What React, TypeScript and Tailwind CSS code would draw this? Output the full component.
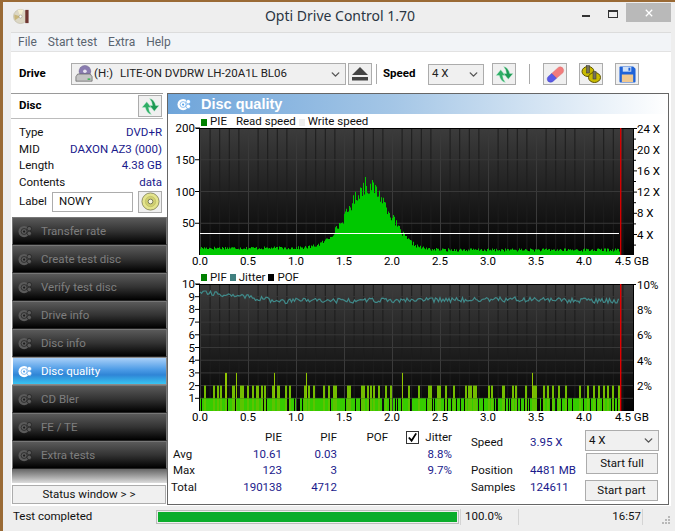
import { ChevronDown } from "lucide-react";

function makeRandom(seed: number) {
  let s = seed;
  return () => {
    s = (s * 1664525 + 1013904223) % 4294967296;
    return s / 4294967296;
  };
}

const plotLeft = 200;
const plotEnd = 619;
const xLabels = ["0.0", "0.5", "1.0", "1.5", "2.0", "2.5", "3.0", "3.5", "4.0"];

function buildPie() {
  const rnd = makeRandom(17);
  let d = "M200 255";
  for (let x = plotLeft; x <= plotEnd; x++) {
    const base = x < 340 ? 11 : 8;
    const dist = x - 368;
    const bump = 100 * Math.exp(-(dist * dist) / 860);
    let v = base + bump + (rnd() - 0.5) * (5 + bump * 0.2);
    if (x === 365) v = 123;
    const y = (255 - v * 0.635).toFixed(1);
    d += `V${y}H${x + 1}`;
  }
  return d + "V255Z";
}

function buildJitter() {
  const rnd = makeRandom(91);
  const stops = [
    [200, 293],
    [233, 295],
    [270, 300],
    [283, 302],
    [303, 300],
    [336, 301],
    [420, 300],
    [520, 299.5],
    [619, 301],
  ];
  const pts: string[] = [];
  for (let x = plotLeft; x <= plotEnd; x += 1.5) {
    let i = 0;
    while (i < stops.length - 2 && stops[i + 1][0] < x) i++;
    const t = (x - stops[i][0]) / (stops[i + 1][0] - stops[i][0]);
    const y = stops[i][1] + (stops[i + 1][1] - stops[i][1]) * t + (rnd() - 0.5) * 5;
    pts.push(`${x},${y.toFixed(1)}`);
  }
  return pts.join(" ");
}

const pifTwoLeft = [103, 130, 140, 150, 185, 190, 210, 215, 232, 245, 258, 262, 272, 282, 305, 320, 325, 345, 358, 403, 415, 430, 460, 475, 490, 495, 530, 537, 572, 580, 592, 600, 610, 625, 645, 660, 715, 745];
const pifTwoRight = [25, 30, 50, 55, 58, 75, 100, 135, 145, 150, 158, 165, 205, 212, 245, 250, 275, 285, 315, 340, 345, 370, 380, 395, 415, 435, 478, 500, 520, 535, 550, 560, 575, 595, 598];
const pifThree = [225, 226, 236, 274, 306, 402, 532];

function buildPif() {
  const rnd = makeRandom(5);
  const twos = new Set([
    ...pifTwoLeft.map((z) => Math.round(170 + z / 3)),
    ...pifTwoRight.map((z) => Math.round(420 + z / 3)),
  ]);
  const bars: { x: number; level: number }[] = [];
  for (let x = plotLeft; x <= plotEnd; x++) {
    const hardGap = (x >= 262 && x <= 266) || (x >= 287 && x <= 290) || (x >= 297 && x <= 299) || x === 201;
    const chance = x < 320 ? 0.95 : 0.7;
    let level = !hardGap && rnd() < chance ? 1 : 0;
    if (twos.has(x) || twos.has(x - 1)) level = 2;
    if (pifThree.includes(x)) level = 3;
    bars.push({ x, level });
  }
  return bars;
}

const piePath = buildPie();
const jitterPoints = buildJitter();
const pifBars = buildPif();

function PlotBackground({ id, top }: { id: string; top: number }) {
  const bottom = top + 127;
  return (
    <>
      <defs>
        <linearGradient id={id} x1="0" y1="0" x2="0" y2="1">
          <stop offset="0" stopColor="#3c3c3c" />
          <stop offset="1" stopColor="#030303" />
        </linearGradient>
      </defs>
      <rect x="200" y={top} width="433" height="127" fill={`url(#${id})`} />
      {Array.from({ length: 45 }, (_, i) => (
        <line
          key={i}
          x1={200.5 + i * 9.6}
          x2={200.5 + i * 9.6}
          y1={top}
          y2={bottom}
          stroke={i % 5 === 0 ? "#3a3a3a" : "#1d1d1d"}
        />
      ))}
      <line x1="196" x2="636" y1={top + 0.5} y2={top + 0.5} stroke="#000" />
      <line x1="199.5" x2="199.5" y1={top} y2={bottom} stroke="#000" />
      <line x1="633.5" x2="633.5" y1={top} y2={bottom} stroke="#000" />
    </>
  );
}

function XAxis({ y }: { y: number }) {
  return (
    <>
      {xLabels.map((t, i) => (
        <text key={t} x={200 + i * 48} y={y} textAnchor="middle" fontSize="11.5" fill="#000">
          {t}
        </text>
      ))}
      <text x="615" y={y} fontSize="11.5" fill="#000">
        4.5 GB
      </text>
    </>
  );
}

function PieChart() {
  const hLines = [50, 100, 150].map((v) => 255 - v * 0.635);
  const speeds = ["24 X", "20 X", "16 X", "12 X", "8 X", "4 X"];
  return (
    <svg viewBox="168 128 500 142" className="w-[500px] h-[142px] block overflow-visible">
      <PlotBackground id="pieBg" top={128} />
      {hLines.map((y) => (
        <line key={y} x1="200" x2="633" y1={y} y2={y} stroke="#383838" />
      ))}
      <path d={piePath} fill="#00c800" />
      <line x1="200" x2="619" y1="233.5" y2="233.5" stroke="#fff" />
      <line x1="620.7" x2="620.7" y1="128" y2="255" stroke="#d40000" strokeWidth="1.4" />
      {[200, 150, 100, 50].map((v) => (
        <g key={v}>
          <line x1="195" x2="200" y1={255 - v * 0.635} y2={255 - v * 0.635} stroke="#000" />
          <text x="195" y={259 - v * 0.635} textAnchor="end" fontSize="11.5" fill="#000">
            {v}
          </text>
        </g>
      ))}
      {Array.from({ length: 12 }, (_, i) => (
        <line key={i} x1="633" x2={i % 2 === 0 ? 637 : 636} y1={128.5 + i * 10.6} y2={128.5 + i * 10.6} stroke="#000" />
      ))}
      {speeds.map((t, i) => (
        <text key={t} x="637" y={133 + i * 21.1} fontSize="11.5" fill="#000">
          {t}
        </text>
      ))}
      <XAxis y={265} />
    </svg>
  );
}

function PifChart() {
  return (
    <svg viewBox="168 284 500 141" className="w-[500px] h-[141px] block overflow-visible">
      <PlotBackground id="pifBg" top={284} />
      {[1, 2, 3, 4, 5, 6, 7, 8, 9].map((v) => (
        <line key={v} x1="200" x2="633" y1={411 - v * 12.7} y2={411 - v * 12.7} stroke="#383838" />
      ))}
      {pifBars.map((b) =>
        b.level === 0 ? null : (
          <g key={b.x}>
            {b.level >= 2 && <rect x={b.x} y={411 - b.level * 12.7} width="1" height={(b.level - 1) * 12.7} fill={b.level === 3 ? "#8fc400" : "#74bd00"} />}
            <rect x={b.x} y="398.3" width="1" height="12.7" fill={b.level >= 2 ? "#5cc400" : "#36cc00"} />
          </g>
        ),
      )}
      <polyline points={jitterPoints} fill="none" stroke="#408a8a" strokeWidth="1.2" />
      <line x1="620.7" x2="620.7" y1="284" y2="411" stroke="#e00000" strokeWidth="1.4" />
      {[10, 9, 8, 7, 6, 5, 4, 3, 2, 1].map((v) => (
        <g key={v}>
          <line x1="195" x2="200" y1={411 - v * 12.7} y2={411 - v * 12.7} stroke="#000" />
          <text x="195" y={415 - v * 12.7} textAnchor="end" fontSize="11.5" fill="#000">
            {v}
          </text>
        </g>
      ))}
      {["10%", "8%", "6%", "4%", "2%"].map((t, i) => (
        <text key={t} x="637" y={289 + i * 25.2} fontSize="11.5" fill="#000">
          {t}
        </text>
      ))}
      <XAxis y={421} />
    </svg>
  );
}

function ArrowsIcon() {
  return (
    <svg viewBox="0 0 20 20" className="w-[19px] h-[19px]">
      <path d="M1 11 L6 5 L11 11 H8 Q8 15 11 18.5 Q6 17.5 4.5 11 Z" fill="#2fae66" stroke="#c8f0d8" strokeWidth="0.5" />
      <path d="M19 9 L14 15 L9 9 H12 Q12 5 9 1.5 Q14 2.5 15.5 9 Z" fill="#1d9a54" stroke="#c8f0d8" strokeWidth="0.5" />
    </svg>
  );
}

function EjectIcon() {
  return (
    <svg viewBox="0 0 18 14" className="w-[18px] h-[14px]">
      <path d="M9 0 L17 8 H1 Z" fill="#444" />
      <rect x="1" y="10" width="16" height="3.5" fill="#444" />
    </svg>
  );
}

function EraserIcon() {
  return (
    <svg viewBox="0 0 20 20" className="w-[19px] h-[19px]">
      <path d="M6 9 L13 2.5 Q15 1 17.5 3 Q19.5 5.5 18 8 L11 14 Z" fill="#f27c7c" stroke="#d86a6a" strokeWidth="0.5" />
      <path d="M6 9 L11 14 L7 17.5 Q4 19 2 17 Q0.5 14.5 2 12.5 Z" fill="#5a5ae6" stroke="#3c3cc0" strokeWidth="0.5" />
    </svg>
  );
}

function CoinsIcon() {
  return (
    <svg viewBox="0 0 20 20" className="w-[20px] h-[20px]">
      <ellipse cx="7" cy="7.5" rx="6" ry="5" fill="#c9bb00" stroke="#5c5200" />
      <ellipse cx="13.5" cy="13.5" rx="6" ry="5" fill="#c9bb00" stroke="#5c5200" />
      <rect x="5.5" y="1.5" width="3" height="7.5" fill="#77725a" stroke="#333" strokeWidth="0.5" />
      <rect x="12" y="7.5" width="3" height="7.5" fill="#77725a" stroke="#333" strokeWidth="0.5" />
    </svg>
  );
}

function FloppyIcon() {
  return (
    <svg viewBox="0 0 18 18" className="w-[17px] h-[17px]">
      <path d="M0.5 1.5 Q0.5 0.5 1.5 0.5 H15 L17.5 3 V16.5 Q17.5 17.5 16.5 17.5 H1.5 Q0.5 17.5 0.5 16.5 Z" fill="#1f63d8" />
      <rect x="4" y="1" width="9" height="5" fill="#cfe0f6" />
      <rect x="10" y="1.8" width="2" height="3.2" fill="#1f63d8" />
      <rect x="3" y="9" width="12" height="8" fill="#f0c890" />
    </svg>
  );
}

function DriveIcon() {
  return (
    <svg viewBox="0 0 20 20" className="w-[18px] h-[18px] shrink-0">
      <circle cx="11" cy="7" r="6.5" fill="#8a7cb0" stroke="#5d5480" strokeWidth="0.5" />
      <circle cx="11" cy="7" r="2" fill="#e8e4f0" />
      <path d="M1 13 L3 10 H17 L19 13 V18 H1 Z" fill="#c4c4c4" stroke="#555" strokeWidth="0.7" />
      <rect x="14" y="15" width="3" height="1.4" fill="#20b040" />
    </svg>
  );
}

function GoldDiscIcon() {
  return (
    <svg viewBox="0 0 20 20" className="w-[19px] h-[19px]">
      <circle cx="10" cy="10" r="9" fill="#e4e48c" stroke="#8c8c60" />
      <circle cx="10" cy="10" r="5.5" fill="#cfcf70" stroke="#b0b060" strokeWidth="0.5" />
      <circle cx="10" cy="10" r="2.5" fill="#f6f6e0" stroke="#77775a" />
    </svg>
  );
}

function AppIcon() {
  return (
    <svg viewBox="0 0 18 18" className="w-[17px] h-[17px]">
      <circle cx="8" cy="9" r="7.5" fill="#dcd7c4" stroke="#b5ad96" strokeWidth="0.5" />
      <path d="M8 9 L5 2 Q8 1 11 2 Z" fill="#f5efd0" />
      <path d="M8 9 L2 13 Q1 10 1.5 7 Z" fill="#c9b67a" />
      <circle cx="8" cy="9" r="1.6" fill="#fff" stroke="#88836f" strokeWidth="0.5" />
      <rect x="13" y="2" width="3.5" height="14" fill="#6e3530" />
    </svg>
  );
}

function TestIcon({ active }: { active?: boolean }) {
  const c = active ? "#ffffff" : "#5a5a5a";
  const hole = active ? "#5aa4ea" : "#1d1d1d";
  return (
    <svg viewBox="0 0 16 16" className="w-[15px] h-[15px] shrink-0">
      <circle cx="6.5" cy="8" r="6" fill={c} />
      <circle cx="6.5" cy="8" r="3.2" fill="none" stroke={hole} strokeWidth="0.7" />
      <circle cx="6.5" cy="8" r="1.2" fill={hole} />
      <circle cx="12" cy="5" r="2.4" fill={c} stroke={hole} strokeWidth="0.7" />
      <circle cx="12" cy="10" r="2.4" fill={c} stroke={hole} strokeWidth="0.7" />
    </svg>
  );
}

function ToolButton({ children, className = "" }: { children: React.ReactNode; className?: string }) {
  return (
    <div className={`w-[24px] h-[22px] bg-[#f0f0f0] border border-[#acacac] flex items-center justify-center shrink-0 ${className}`}>
      {children}
    </div>
  );
}

function Select({ children, className = "" }: { children: React.ReactNode; className?: string }) {
  return (
    <div className={`h-[21px] bg-[#f0f0f0] border border-[#acacac] flex items-center pl-[3px] pr-[3px] shrink-0 ${className}`}>
      <div className="flex-1 flex items-center min-w-0">{children}</div>
      <ChevronDown size={13} strokeWidth={2.6} className="text-[#555]" />
    </div>
  );
}

function NavButton({ label, active }: { label: string; active?: boolean }) {
  return (
    <div
      className={
        active
          ? "h-[28px] flex items-center gap-[8px] pl-[5px] pt-[1px] border border-[#8a8a8a] border-l-white bg-[linear-gradient(#a9d0f8,#4c9be6_45%,#2f85d6_65%,#38c4f2)] text-white"
          : "h-[28px] flex items-center gap-[8px] pl-[5px] pt-[1px] border border-[#777] border-b-[#222] bg-[linear-gradient(#5a5a5a,#333_50%,#000)] text-[#7e7e7e]"
      }
    >
      <TestIcon active={active} />
      <span>{label}</span>
    </div>
  );
}

function InfoRow({ label, value }: { label: string; value: string }) {
  return (
    <div className="h-[16.4px] flex items-center justify-between pl-[8px] pr-[1px]">
      <span className="text-[#111]">{label}</span>
      <span className="text-[#1a1a8c]">{value}</span>
    </div>
  );
}

function Sidebar() {
  const items = ["Transfer rate", "Create test disc", "Verify test disc", "Drive info", "Disc info", "Disc quality", "CD Bler", "FE / TE", "Extra tests"];
  return (
    <div className="w-[156px] shrink-0 flex flex-col">
      <div className="border-t border-[#9a9a9a] w-[152px]">
        <div className="h-[25px] flex items-center justify-between pl-[8px] border-b border-[#bcbcbc]">
          <span className="font-bold text-black">Disc</span>
          <ToolButton className="mr-px">
            <ArrowsIcon />
          </ToolButton>
        </div>
        <div className="pt-[6px] h-[98px]">
          <InfoRow label="Type" value="DVD+R" />
          <InfoRow label="MID" value="DAXON AZ3 (000)" />
          <InfoRow label="Length" value="4.38 GB" />
          <InfoRow label="Contents" value="data" />
          <div className="flex items-center pl-[8px]">
            <span className="w-[33px] text-[#111]">Label</span>
            <div className="w-[81px] h-[20px] border border-[#acacac] flex items-center pl-[6px] text-[#111]">NOWY</div>
            <ToolButton className="ml-[5px] h-[21px]">
              <GoldDiscIcon />
            </ToolButton>
          </div>
        </div>
      </div>
      <div className="ml-px w-[155px] flex flex-col">
        {items.map((t) => (
          <NavButton key={t} label={t} active={t === "Disc quality"} />
        ))}
        <div className="h-[14px] bg-linear-to-b from-[#666] to-[#ddd]" />
        <div className="mt-[2px] mr-[1px] h-[19px] bg-[#f0f0f0] border border-[#acacac] flex items-center justify-center text-[#111]">
          Status window &gt; &gt;
        </div>
      </div>
    </div>
  );
}

function StatCell({ children, className = "" }: { children?: React.ReactNode; className?: string }) {
  return <div className={`flex items-center ${className}`}>{children}</div>;
}

function Stats() {
  const rows = [
    ["Avg", "10.61", "0.03", "8.8%"],
    ["Max", "123", "3", "9.7%"],
    ["Total", "190138", "4712", ""],
  ];
  return (
    <div className="h-[79px] flex text-[#111]">
      <div className="w-[285px] pt-[5px] grid grid-cols-[50px_64px_55px_54px_28px_33px] auto-rows-[16.4px]">
        <StatCell />
        <StatCell className="justify-end">PIE</StatCell>
        <StatCell className="justify-end">PIF</StatCell>
        <StatCell className="justify-end pr-[3px]">POF</StatCell>
        <StatCell className="justify-end">
          <div className="w-[13px] h-[13px] border border-[#333] bg-white flex items-center justify-center -translate-y-[1px]">
            <svg viewBox="0 0 12 12" className="w-[11px] h-[11px]">
              <path d="M2 6 L5 9.5 L10 1.5" fill="none" stroke="#000" strokeWidth="2" />
            </svg>
          </div>
        </StatCell>
        <StatCell className="justify-end">Jitter</StatCell>
        {rows.map((r) => (
          <div key={r[0]} className="contents">
            <StatCell className={r[0] === "Total" ? "pl-[3px]" : "pl-[5px]"}>{r[0]}</StatCell>
            <StatCell className="justify-end text-[#1a1a8c]">{r[1]}</StatCell>
            <StatCell className="justify-end text-[#1a1a8c]">{r[2]}</StatCell>
            <StatCell />
            <StatCell />
            <StatCell className="justify-end text-[#1a1a8c]">{r[3]}</StatCell>
          </div>
        ))}
      </div>
      <div className="ml-[18px] w-[114px] pt-[10px]">
        <div className="h-[16.4px] flex items-center">
          <span className="w-[59px]">Speed</span>
          <span className="text-[#1a1a8c]">3.95 X</span>
        </div>
        <div className="h-[11.6px]" />
        <div className="h-[16.4px] flex items-center">
          <span className="w-[59px]">Position</span>
          <span className="text-[#1a1a8c]">4481 MB</span>
        </div>
        <div className="h-[16.4px] flex items-center">
          <span className="w-[59px]">Samples</span>
          <span className="text-[#1a1a8c]">124611</span>
        </div>
      </div>
      <div className="w-[74px] pt-[5px] flex flex-col">
        <Select className="w-[74px] bg-[#f0f0f0]">4 X</Select>
        <div className="mt-[2px] ml-[1px] w-[72px] h-[21px] bg-[#f0f0f0] border border-[#acacac] flex items-center justify-center">Start full</div>
        <div className="mt-[6px] w-[73px] h-[21px] bg-[#f0f0f0] border border-[#acacac] flex items-center justify-center">Start part</div>
      </div>
    </div>
  );
}

function Legend({ items, className = "" }: { items: { color: string; label: string; gap?: string }[]; className?: string }) {
  return (
    <div className={`h-[14px] flex items-center pl-[33px] text-[#111] ${className}`}>
      {items.map((it) => (
        <div key={it.label} className={`flex items-center ${it.gap ?? ""}`}>
          {it.color !== "none" && (
            <div className="w-[6px] h-[7px] mr-[3px]" style={{ backgroundColor: it.color }} />
          )}
          <span>{it.label}</span>
        </div>
      ))}
    </div>
  );
}

export default function App() {
  return (
    <div className="w-[675px] h-[531px] overflow-hidden bg-[#9a6a35] pt-[2px] pl-[3px] font-['Roboto',Arial,sans-serif] text-[11.5px] leading-none">
      <div className="h-[529px] bg-[#eeeeee] flex flex-col">
        <div className="h-[30px] flex relative shrink-0">
          <div className="pl-[10px] pt-[6px] w-[27px]">
            <AppIcon />
          </div>
          <div className="flex-1 text-center pt-[7px] pr-[25px] font-['Noto_Sans',sans-serif] text-[14px] text-[#2a3542]">
            Opti Drive Control 1.70
          </div>
          <div className="absolute right-[4px] top-[1px] flex items-start">
            <div className="w-[8px] h-[2px] bg-[#333] mt-[12px] mr-[18px]" />
            <div className="w-[10px] h-[8px] border border-[#333] border-t-2 mt-[7px] mr-[8px]" />
            <div className="w-[45px] h-[19px] bg-[#b9b9b9] text-white flex items-center justify-center">
              <svg viewBox="0 0 10 10" className="w-[8px] h-[8px]">
                <path d="M1 1 L9 9 M9 1 L1 9" stroke="#fff" strokeWidth="1.6" />
              </svg>
            </div>
          </div>
        </div>

        <div className="ml-[8px] mr-[4px] flex flex-col border-t border-[#dcdcdc]">
          <div className="h-[19px] bg-[#f2f4f7] border-b border-[#e2e2e2] flex items-center text-[12px] text-[#5a6470] pl-[7px] gap-[11px]">
            <span>File</span>
            <span>Start test</span>
            <span>Extra</span>
            <span>Help</span>
          </div>
          <div className="h-[41px] bg-white flex items-center pt-[3px]">
            <span className="ml-[8px] w-[52px] font-bold text-black">Drive</span>
            <Select className="w-[275px] h-[22px]">
              <DriveIcon />
              <span className="ml-[1px] w-[26px] text-[#222]">(H:)</span>
              <span className="text-[#222]">LITE-ON DVDRW LH-20A1L BL06</span>
            </Select>
            <ToolButton className="ml-[2px]">
              <EjectIcon />
            </ToolButton>
            <div className="w-px h-[20px] bg-[#aaa] ml-[4px]" />
            <span className="ml-[6px] w-[45px] font-bold text-black">Speed</span>
            <Select className="w-[56px]">
              <span className="text-[#222]">4 X</span>
            </Select>
            <ToolButton className="ml-[8px]">
              <ArrowsIcon />
            </ToolButton>
            <div className="w-px h-[20px] bg-[#aaa] ml-[13px]" />
            <ToolButton className="ml-[13px]">
              <EraserIcon />
            </ToolButton>
            <ToolButton className="ml-[12px]">
              <CoinsIcon />
            </ToolButton>
            <ToolButton className="ml-[12px]">
              <FloppyIcon />
            </ToolButton>
          </div>

          <div className="bg-white flex h-[413px] w-[660px]">
            <Sidebar />
            <div className="w-[502px] h-[412px] border border-[#666] bg-white flex flex-col">
              <div className="h-[20px] bg-[linear-gradient(90deg,#6fa5da,#a4c6e6_45%,#ffffff)] flex items-center pl-[9px]">
                <TestIcon active />
                <span className="ml-[9px] font-bold text-white text-[14.5px] font-['Liberation_Sans',sans-serif]">Disc quality</span>
              </div>
              <Legend
                className="pt-[2px]"
                items={[
                  { color: "#008000", label: "PIE", gap: "mr-[3px]" },
                  { color: "none", label: "Read speed", gap: "ml-[6px] mr-[3px]" },
                  { color: "#eeeeee", label: "Write speed" },
                ]}
              />
              <PieChart />
              <Legend
                className="pt-[1px]"
                items={[
                  { color: "#008000", label: "PIF", gap: "mr-[3px]" },
                  { color: "#408080", label: "Jitter", gap: "mr-[3px]" },
                  { color: "#000000", label: "POF" },
                ]}
              />
              <PifChart />
              <Stats />
            </div>
          </div>

          <div className="h-[19px] flex items-center text-[#111] pt-[2px]">
            <span className="pl-[2px] w-[145px]">Test completed</span>
            <div className="w-[303px] h-[14px] border border-[#bcbcbc] p-px">
              <div className="h-full bg-[#0aad2b]" />
            </div>
            <div className="w-px h-[16px] bg-[#d4d4d4] ml-[1px]" />
            <span className="pl-[4px] w-[57px]">100.0%</span>
            <div className="w-px h-[16px] bg-[#d4d4d4]" />
            <span className="w-[122px] text-right">16:57</span>
            <div className="w-px h-[16px] bg-[#d4d4d4] ml-[1px]" />
            <svg viewBox="0 0 8 8" className="w-[8px] h-[8px] ml-[19px] self-end mb-[1px]">
              <path d="M6 0h2v2H6zM3 3h2v2H3zM6 3h2v2H6zM0 6h2v2H0zM3 6h2v2H3zM6 6h2v2H6z" fill="#b8b8b8" />
            </svg>
          </div>
        </div>
      </div>
    </div>
  );
}
